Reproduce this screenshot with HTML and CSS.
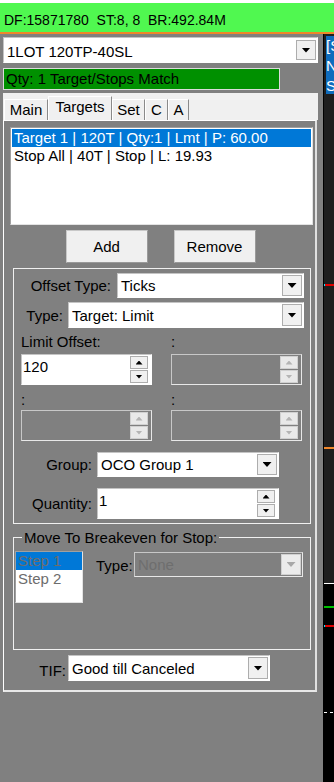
FILE: index.html
```html
<!DOCTYPE html>
<html>
<head>
<meta charset="utf-8">
<title>Order Panel</title>
<link rel="stylesheet" href="styles.css">
</head>
<body>
<div class="topline"></div>
<div class="status">DF:15871780  ST:8, 8  BR:492.84M</div>
<div class="main">
  <div class="left">
    <div class="combo c-main"><span class="val">1LOT 120TP-40SL</span><span class="dd"><i class="arr"></i></span></div>
    <div class="match">Qty: 1 Target/Stops Match</div>
    <div class="tabs">
      <div class="tabstrip">
        <span class="tab t-main">Main</span><span class="tab t-targets sel">Targets</span><span class="tab t-set">Set</span><span class="tab t-c">C</span><span class="tab t-a">A</span>
      </div>
      <div class="page">
        <div class="list">
          <div class="item sel">Target 1 | 120T | Qty:1 | Lmt | P: 60.00</div>
          <div class="item">Stop All | 40T | Stop | L: 19.93</div>
        </div>
        <div class="btns"><span class="btn">Add</span><span class="btn">Remove</span></div>

        <div class="group g1">
          <div class="row r-offset">
            <span class="lab">Offset Type:</span>
            <div class="combo"><span class="val">Ticks</span><span class="dd"><i class="arr"></i></span></div>
          </div>
          <div class="row r-type">
            <span class="lab">Type:</span>
            <div class="combo"><span class="val">Target: Limit</span><span class="dd"><i class="arr"></i></span></div>
          </div>
          <div class="pair labels l1"><span>Limit Offset:</span><span>:</span></div>
          <div class="pair spins">
            <div class="spin"><span class="sv">120</span><span class="sb"><span class="sbtn"><i class="up"></i></span><span class="sbtn"><i class="down"></i></span></span></div>
            <div class="spin off"><span class="sv"></span><span class="sb"><span class="sbtn"><i class="up"></i></span><span class="sbtn"><i class="down"></i></span></span></div>
          </div>
          <div class="pair labels l2"><span>:</span><span>:</span></div>
          <div class="pair spins">
            <div class="spin off"><span class="sv"></span><span class="sb"><span class="sbtn"><i class="up"></i></span><span class="sbtn"><i class="down"></i></span></span></div>
            <div class="spin off"><span class="sv"></span><span class="sb"><span class="sbtn"><i class="up"></i></span><span class="sbtn"><i class="down"></i></span></span></div>
          </div>
          <div class="row r-group">
            <span class="lab">Group:</span>
            <div class="combo"><span class="val">OCO Group 1</span><span class="dd"><i class="arr"></i></span></div>
          </div>
          <div class="row r-qty">
            <span class="lab">Quantity:</span>
            <div class="spin"><span class="sv">1</span><span class="sb"><span class="sbtn"><i class="up"></i></span><span class="sbtn"><i class="down"></i></span></span></div>
          </div>
        </div>

        <fieldset class="group g2">
          <legend>Move To Breakeven for Stop:</legend>
          <div class="g2row">
            <div class="steps">
              <div class="item sel">Step 1</div>
              <div class="item">Step 2</div>
            </div>
            <span class="tlab">Type:</span>
            <div class="combo off"><span class="val">None</span><span class="dd"><i class="arr"></i></span></div>
          </div>
        </fieldset>

        <div class="row r-tif">
          <span class="lab">TIF:</span>
          <div class="combo"><span class="val">Good till Canceled</span><span class="dd"><i class="arr"></i></span></div>
        </div>
      </div>
    </div>
  </div>

  <div class="chart">
    <div class="plot"></div>
    <div class="sep"></div>
    <div class="blue">[S<br>N<br>S</div>
    <span class="mark red m1"></span>
    <span class="mark orange m2"></span>
    <span class="mark green m3"></span>
    <span class="mark red m4"></span>
    <span class="dash d1"></span>
    <span class="dash d2"></span>
  </div>
</div>
</body>
</html>
```

FILE: styles.css
```css
* { box-sizing: border-box; }
html, body { margin: 0; padding: 0; }
body {
  width: 334px;
  height: 782px;
  overflow: hidden;
  background: #808080;
  font-family: "Liberation Sans", Arial, sans-serif;
  font-size: 15px;
  color: #000;
}

.topline { height: 3px; background: #fff; }
.status {
  height: 31px;
  background: #50f850;
  border-bottom: 2px solid #f0862a;
  padding: 9px 0 0 4px;
  font-size: 14px;
  line-height: 17px;
  white-space: pre;
}

.main { display: flex; height: 748px; }
.left { width: 323px; padding: 3px 0 0 3px; }

/* combo box */
.combo {
  display: flex;
  align-items: stretch;
  background: #fff;
  border: 1px solid;
  border-color: #c4c4c4 #fff #fff #c4c4c4;
  padding: 1px;
}
.combo .val {
  flex: 1;
  align-self: center;
  padding-left: 2px;
  line-height: 17px;
  white-space: nowrap;
  overflow: hidden;
}
.combo .dd {
  width: 20px;
  background: #f0f0f0;
  border: 1px solid #adadad;
  display: flex;
  align-items: center;
  justify-content: center;
}
.arr {
  display: block;
  width: 9px;
  height: 5px;
  background: #000;
  clip-path: polygon(0 0, 100% 0, 50% 100%);
}
.c-main { width: 315px; height: 26px; padding: 2px 1px; }
.c-main .val { padding-top: 2px; }

.match {
  margin-top: 5px;
  width: 277px;
  height: 22px;
  background: #009000;
  border: 1px solid #dcdcdc;
  padding-left: 2px;
  line-height: 20px;
}

/* tabs */
.tabs { margin-top: 3px; width: 315px; }
.tabstrip {
  height: 27px;
  background: #f0f0f0;
  display: flex;
  align-items: flex-end;
  padding-left: 1px;
}
.tab {
  height: 21px;
  background: #f0f0f0;
  border: 1px solid;
  border-color: #fff #8a8a8a transparent #fff;
  border-bottom: none;
  padding-top: 1px;
  line-height: 17px;
  text-align: center;
}
.tab.sel { height: 24px; }
.t-main { width: 44px; }
.t-targets { width: 64px; }
.t-set { width: 33px; }
.t-c { width: 23px; }
.t-a { width: 21px; }

.page {
  width: 314px;
  height: 572px;
  background: #808080;
  border: 1px solid #fff;
  border-right: 2px solid #e0e0e0;
  border-bottom: 2px solid #e8e8e8;
}

.list {
  margin: 6px 0 0 6px;
  width: 303px;
  height: 98px;
  background: #fff;
  border: 1px solid;
  border-color: #a0a0a0 #e3e3e3 #e3e3e3 #a0a0a0;
  padding: 1px 1px;
}
.item {
  height: 18px;
  line-height: 18px;
  padding-left: 2px;
  white-space: nowrap;
}
.item.sel { background: #0078d7; color: #fff; }

.btns {
  margin-top: 5px;
  display: flex;
  justify-content: center;
  gap: 26px;
  padding-left: 2px;
}
.btn {
  width: 82px;
  height: 33px;
  background: #f0f0f0;
  border: 1px solid #c8c8c8;
  border-right-color: #9a9a9a;
  border-bottom-color: #9a9a9a;
  display: flex;
  align-items: center;
  justify-content: center;
}

/* groups */
.group {
  margin: 5px 0 0 9px;
  width: 298px;
  border: 1px solid #f0f0f0;
}
.g1 { height: 256px; }
.row { display: flex; align-items: center; }
.lab { text-align: right; line-height: 17px; white-space: nowrap; }

.r-offset { margin-top: 4px; }
.r-offset .lab { width: 97px; }
.r-offset .combo { margin-left: 6px; width: 187px; height: 25px; }

.r-type { margin-top: 4px; }
.r-type .lab { width: 49px; }
.r-type .combo { margin-left: 5px; width: 236px; height: 26px; }

.pair { display: flex; padding-left: 7px; gap: 19px; }
.pair > * { width: 131px; }
.labels { line-height: 17px; }
.l1 { margin-top: 5px; }
.l2 { margin-top: 6px; }
.l1 + .spins { margin-top: 4px; }
.l2 + .spins { margin-top: 2px; }

.spin {
  display: flex;
  height: 31px;
  background: #fff;
  border: 1px solid;
  border-color: #c4c4c4 #fff #fff #c4c4c4;
}
.spin .sv { flex: 1; padding: 3px 0 0 1px; line-height: 17px; }
.spin .sb {
  width: 18px;
  margin: 1px 3px 1px 0;
  display: flex;
  flex-direction: column;
  gap: 1px;
}
.sbtn {
  flex: 1;
  background: #f0f0f0;
  border: 1px solid #adadad;
  display: flex;
  align-items: center;
  justify-content: center;
}
.up, .down { display: block; width: 7px; height: 4px; background: #000; }
.up { clip-path: polygon(50% 0, 100% 100%, 0 100%); }
.down { clip-path: polygon(0 0, 100% 0, 50% 100%); }

.spin.off { background: transparent; border-color: #c8c8c8 #e8e8e8 #e8e8e8 #c8c8c8; }
.spin.off .sbtn { background: #e9e9e9; border-color: #d0d0d0; }
.spin.off .up, .spin.off .down { background: #b4b4b4; }

.r-group { margin-top: 11px; }
.r-group .lab, .r-qty .lab { width: 78px; }
.r-group .combo { margin-left: 5px; width: 182px; height: 25px; }
.r-qty { margin-top: 11px; }
.r-qty .spin { margin-left: 5px; width: 182px; }

fieldset.g2 {
  margin-top: 5px;
  height: 121px;
  padding: 0;
  min-width: 0;
}
.g2 legend {
  margin-left: 8px;
  padding: 0 2px;
  line-height: 17px;
}
.g2row { display: flex; align-items: flex-start; }
.steps {
  margin: 5px 0 0 1px;
  width: 68px;
  height: 52px;
  background: #fff;
  border: 1px solid;
  border-color: #a0a0a0 #e3e3e3 #e3e3e3 #a0a0a0;
  padding-top: 0;
}
.steps .item { color: #6d6d6d; padding-left: 2px; }
.steps .item.sel { color: #6d6d6d; }
.tlab { margin: 11px 0 0 13px; width: 38px; line-height: 17px; }
.combo.off {
  margin-top: 6px;
  width: 169px;
  height: 25px;
  background: transparent;
  border-color: #c8c8c8 #e8e8e8 #e8e8e8 #c8c8c8;
}
.combo.off .val { color: #6e6e6e; }
.combo.off .dd { background: #ebebeb; border-color: #d0d0d0; }
.combo.off .arr { background: #a8a8a8; }

.r-tif { margin-top: 5px; }
.r-tif .lab { width: 62px; padding-top: 4px; }
.r-tif .combo { margin-left: 2px; width: 202px; height: 26px; }

/* right chart strip */
.chart {
  width: 11px;
  border-left: 1px solid #000;
  background: #000;
  position: relative;
  overflow: hidden;
}
.plot { height: 549px; background: #1e1e1e; }
.sep { height: 1px; background: #fff; }
.blue {
  position: absolute;
  top: 2px;
  left: 2px;
  width: 8px;
  height: 58px;
  background: #0f6cbd;
  color: #fff;
  line-height: 20px;
  padding-top: 0;
  white-space: nowrap;
  overflow: hidden;
}
.mark { position: absolute; left: 0; width: 10px; height: 2px; }
.red { background: linear-gradient(to right, #00e5ff 0 1px, #e00000 1px); }
.orange { background: #f0862a; }
.green { background: #00c000; }
.m1 { top: 250px; }
.m2 { top: 413px; }
.m3 { top: 572px; }
.m4 { top: 591px; }
.dash { position: absolute; top: 678px; height: 1px; width: 3px; background: #fff; }
.d1 { left: 0; }
.d2 { left: 6px; }
```
